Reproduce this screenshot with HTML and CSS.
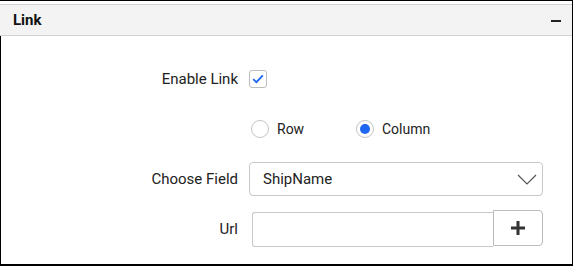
FILE: index.html
```html
<!DOCTYPE html>
<html lang="en">
<head>
    <meta charset="UTF-8">
    <title>Link</title>
    <link rel="stylesheet" href="styles.css">
</head>
<body>

<div class="panel">
    <header class="panel-header">
        <h2>Link</h2>
        <span class="collapse"></span>
    </header>

    <div class="panel-body">
        <div class="form">
            <label class="label" for="enable-link">Enable Link</label>
            <div class="field">
                <span class="checkbox" id="enable-link">
                    <svg width="12" height="10" viewBox="0 0 12 10"><path d="M1.2 5.2 L4.4 8.2 L10.8 1.4" fill="none" stroke="#1f66f2" stroke-width="1.8"/></svg>
                </span>
            </div>

            <span class="label"></span>
            <div class="field radios">
                <span class="radio-item first"><span class="radio"></span>Row</span>
                <span class="radio-item"><span class="radio checked"></span>Column</span>
            </div>

            <label class="label">Choose Field</label>
            <div class="field">
                <div class="select">
                    <span>ShipName</span>
                    <svg width="20" height="11" viewBox="0 0 20 11"><path d="M1 1 L10 10 L19 1" fill="none" stroke="#555" stroke-width="1.2"/></svg>
                </div>
            </div>

            <label class="label">Url</label>
            <div class="field url">
                <input type="text" class="url-input">
                <button class="add-btn">
                    <svg width="14" height="14" viewBox="0 0 14 14"><path d="M7 0 V14 M0 7 H14" stroke="#333" stroke-width="3"/></svg>
                </button>
            </div>
        </div>
    </div>
</div>

</body>
</html>
```

FILE: styles.css
```css
body {
    margin: 0;
    font-family: 'Roboto', 'Liberation Sans', sans-serif;
    font-size: 14px;
    color: #222;
    background-color: #fff;
}

.panel {
    width: 572px;
    height: 263px;
    border-top: 1px solid #000;
    border-right: 1px solid #000;
    border-bottom: 2px solid #000;
}

.panel-header {
    margin-top: 3px;
    height: 30px;
    background-color: #f3f3f3;
    border-top: 1px solid #d3d3d3;
    border-bottom: 1px solid #d3d3d3;
    display: flex;
    align-items: center;
    justify-content: space-between;
    padding: 0 11px 0 13px;
}

.panel-header h2 {
    margin: 0;
    font-size: 15px;
    font-weight: 700;
    color: #111;
}

.collapse {
    width: 10px;
    height: 2px;
    background-color: #222;
    margin-top: 1px;
}

.panel-body {
    height: 228px;
    box-sizing: border-box;
    border-left: 1px solid #000;
    padding-top: 26px;
}

.form {
    display: grid;
    grid-template-columns: 237px 294px;
    grid-auto-rows: 34px;
    column-gap: 11px;
    row-gap: 16px;
}

.label {
    display: flex;
    align-items: center;
    justify-content: flex-end;
    font-size: 15px;
    color: #222;
}

.field {
    display: flex;
    align-items: center;
}

.checkbox {
    width: 16px;
    height: 16px;
    border: 1px solid #bdbdbd;
    border-radius: 3px;
    display: flex;
    align-items: center;
    justify-content: center;
}

.radios {
    padding-left: 2px;
}

.radio-item {
    display: flex;
    align-items: center;
    gap: 8px;
}

.radio-item.first {
    width: 105px;
}

.radio {
    width: 16px;
    height: 16px;
    border: 1px solid #c4c4c4;
    border-radius: 50%;
    display: flex;
    align-items: center;
    justify-content: center;
}

.radio.checked::after {
    content: '';
    width: 10px;
    height: 10px;
    border-radius: 50%;
    background-color: #1f66f2;
}

.select {
    width: 100%;
    height: 34px;
    box-sizing: border-box;
    border: 1px solid #c8c8c8;
    border-radius: 4px;
    display: flex;
    align-items: center;
    justify-content: space-between;
    padding: 0 5px 0 13px;
    font-size: 15px;
}

.url {
    align-items: flex-start;
}

.url-input {
    margin: 0 0 0 3px;
    width: 242px;
    height: 35px;
    box-sizing: border-box;
    border: 1px solid #c8c8c8;
    border-radius: 3px 0 0 3px;
    border-right: none;
    padding: 0 8px;
    font: inherit;
    outline: none;
}

.add-btn {
    margin-top: -2px;
    width: 50px;
    height: 36px;
    box-sizing: border-box;
    background-color: #fff;
    border: 1px solid #bbb;
    border-radius: 0 4px 4px 0;
    display: flex;
    align-items: center;
    justify-content: center;
    padding: 0;
}
```
